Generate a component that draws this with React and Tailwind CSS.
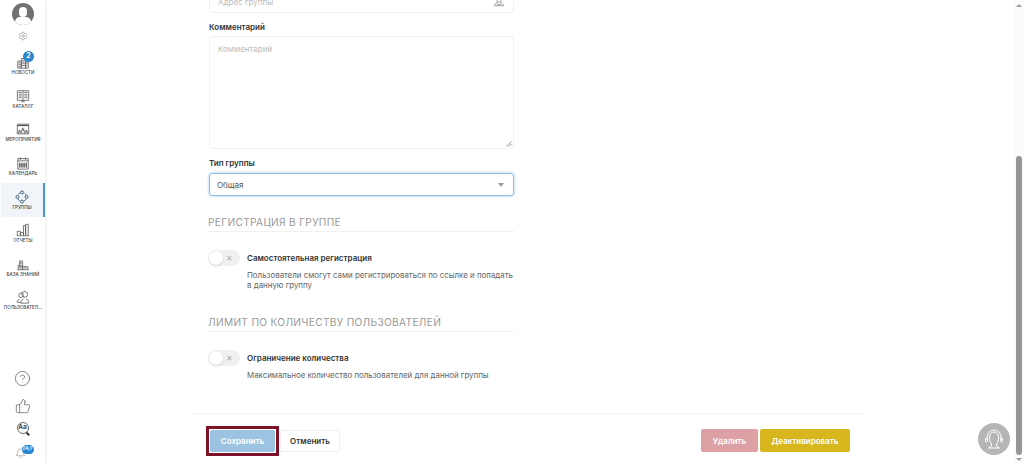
import React from "react";
import { Settings, CircleHelp, ThumbsUp, Bell } from "lucide-react";

const font = { fontFamily: "Inter, 'Noto Sans', sans-serif" };

// Small line drawings for the nav rail, 16x16 box
function NavIcon({ name }) {
  const common = { width: 14, height: 14, viewBox: "0 0 16 16", fill: "none", stroke: "#555", strokeWidth: 0.9, className: "block" };
  if (name === "news")
    return (
      <svg {...common}>
        <path d="M2 15V7h4v8M6 15V4h5v11M11 15V8h3v7H2" />
        <path d="M3 9h2M3 11h2M3 13h2M7 6h3M7 8h3M7 10h3M7 12h3M12 10h1M12 12h1" />
      </svg>
    );
  if (name === "book")
    return (
      <svg {...common}>
        <path d="M1.5 2h13v11h-13zM8 2v12M6 14.5h4" />
        <path d="M3 4h3.5M3 6h3.5M3 8h3.5M3 10h3.5M9.5 4H13M9.5 6H13M9.5 8H13M9.5 10H13" />
      </svg>
    );
  if (name === "event")
    return (
      <svg {...common}>
        <path d="M1.5 2.5h13v11h-13z" />
        <path d="M1.5 4h13" strokeWidth="1.4" />
        <path d="M3 13v-2h2v2M6.5 13V9.5h3V13M11 13v-2h2v2" />
        <circle cx="8" cy="8" r="1" />
        <circle cx="4" cy="10" r="0.7" />
        <circle cx="12" cy="10" r="0.7" />
      </svg>
    );
  if (name === "calendar")
    return (
      <svg {...common}>
        <path d="M2 3h12v12H2zM2 5.5h12M5 1.500v3M11 1.500v3" />
        <path d="M4 7.500v6M6 7.500v6M8 7.500v6M10 7.500v6M12 7.500v6M3.500 9.500h9M3.500 11.500h9" />
      </svg>
    );
  if (name === "groups")
    return (
      <svg {...common} stroke="#3f5d78" strokeWidth="1.100">
        <circle cx="8" cy="8" r="5.200" strokeDasharray="3 5.170" strokeDashoffset="-2.500" />
        <circle cx="8" cy="2.800" r="1.700" />
        <circle cx="2.800" cy="8" r="1.700" />
        <circle cx="13.200" cy="8" r="1.700" />
        <circle cx="8" cy="13.200" r="1.700" />
      </svg>
    );
  if (name === "chart")
    return (
      <svg {...common}>
        <path d="M1.500 14V9.500h3.500V14M5 14V11h3.500v3M8.500 14V3H11v11M11 14V1.500h3V14M1 14.500h14" />
      </svg>
    );
  if (name === "base")
    return (
      <svg {...common}>
        <path d="M1.500 14.500h13M2.500 14.500v-5h5v5M7.500 14.500V11h6v3.500M4 9.500V4.500h3.500v5" />
        <path d="M3.500 11h3M3.500 12.500h3M9 12.500h3M4.800 6h1.500M4.800 7.500h1.500" />
      </svg>
    );
  return (
    <svg {...common}>
      <circle cx="10" cy="5" r="3.300" />
      <circle cx="5.800" cy="6" r="2.600" />
      <path d="M5.500 15c0-3 1.500-4 3-4.600M14.500 15c0-3-1-4-3-4.600M5.500 15h9M1.500 14c0-2 1-3 2.500-3.600M1.500 14h4" />
    </svg>
  );
}

function NavItem({ icon, label, active, badge }) {
  return (
    <div
      className={`relative h-[33.6px] w-[44px] ml-px flex flex-col items-center justify-end pb-[5px] ${
        active ? "bg-[#f1f5f9] border-r-2 border-[#4f93cf]" : ""
      }`}
    >
      <div className="relative">
        <NavIcon name={icon} />
        {badge && (
          <span className="absolute -top-[4px] -right-[4px] w-[11px] h-[11px] rounded-full bg-[#2a86cf] text-white text-[7px] font-bold flex items-center justify-center">
            {badge}
          </span>
        )}
      </div>
      <span className="text-[4.5px] leading-[8px] font-medium text-[#444] whitespace-nowrap">{label}</span>
    </div>
  );
}

function Toggle() {
  return (
    <div className="relative w-[32px] h-[16px] rounded-full bg-[#f0f0f0] shrink-0 flex items-center justify-end pr-[7px] text-[8px] text-[#aaa]">
      <span className="absolute left-[1px] top-[1px] w-[14px] h-[14px] rounded-full bg-white shadow-sm" />
      <span>✕</span>
    </div>
  );
}

function OptionRow({ title, children }) {
  return (
    <div className="flex gap-[7px] -ml-px">
      <Toggle />
      <div className="pt-[2px]">
        <div className="text-[8px] leading-[12px] font-semibold text-[#333]">{title}</div>
        <div className="mt-[6px] text-[7.9px] leading-[10px] text-[#666] w-[268px]">{children}</div>
      </div>
    </div>
  );
}

function SectionTitle({ children }) {
  return (
    <div className="-ml-px w-[306px] h-[15px] border-b border-[#f0f0f0] text-[10.2px] leading-[11px] text-[#999] tracking-[0.3px] whitespace-nowrap">
      {children}
    </div>
  );
}

export default function App() {
  return (
    <div style={font} className="flex h-[465px] w-[1024px] overflow-hidden bg-white">
      {/* nav rail */}
      <aside className="w-[45px] shrink-0 flex flex-col items-center shadow-[1px_0_3px_rgba(0,0,0,0.08)] bg-white">
        <div className="mt-[3px] w-[22px] h-[22px] rounded-full bg-[#727272] overflow-hidden relative shrink-0">
          <span className="absolute left-[7px] top-[4px] w-[8px] h-[10px] rounded-full bg-white" />
          <span className="absolute left-[3px] top-[14px] w-[16px] h-[10px] rounded-full bg-white" />
        </div>
        <Settings className="mt-[6px] mb-[7.600px] shrink-0" size={10} strokeWidth={1} color="#666" />
        <div className="flex flex-col">
          <NavItem icon="news" label="НОВОСТИ" badge="2" />
          <NavItem icon="book" label="КАТАЛОГ" />
          <NavItem icon="event" label="МЕРОПРИЯТИЯ" />
          <NavItem icon="calendar" label="КАЛЕНДАРЬ" />
          <NavItem icon="groups" label="ГРУППЫ" active />
          <NavItem icon="chart" label="ОТЧЕТЫ" />
          <NavItem icon="base" label="БАЗА ЗНАНИЙ" />
          <NavItem icon="users" label="ПОЛЬЗОВАТЕЛ..." />
        </div>
        <div className="flex-1" />
        <CircleHelp size={17} strokeWidth={1} color="#555" className="mb-[11px] shrink-0" />
        <ThumbsUp size={16} strokeWidth={1} color="#555" className="mb-[8px] shrink-0" />
        <div className="relative w-[12px] h-[12px] rounded-full border border-[#666] text-[6.500px] font-semibold text-[#333] flex items-center justify-center mb-[11px] shrink-0">
          Aa
          <span className="absolute -right-[2px] -bottom-[1px] w-[4px] h-[1.500px] bg-[#333] rotate-45" />
        </div>
        <div className="relative mb-[6px] ml-[3px] w-[19px] h-[14px] shrink-0">
          <Bell size={11} strokeWidth={1} color="#666" className="absolute left-0 bottom-0" />
          <span className="absolute right-0 top-0 w-[12px] h-[9px] rounded-full bg-[#2a86cf] text-white text-[4.500px] font-semibold flex items-center justify-center">
            24/7
          </span>
        </div>
      </aside>

      {/* page content */}
      <main className="relative flex-1 flex flex-col min-w-0">
        <div className="flex-1 pl-[164px] -mt-[9px]">
          <div className="w-[305px] flex flex-col">
            <div className="h-[22px] border border-[#f0f0f0] rounded-[3px] flex items-center justify-between px-[8px] text-[8px] text-[#bbb]">
              <span>Адрес группы</span>
              <svg width="10" height="10" viewBox="0 0 10 10" fill="none" stroke="#777" strokeWidth="0.7" className="mr-[1px]">
                <circle cx="5" cy="3" r="2.200" />
                <path d="M3.500 5c-.3 1-1 1.300-2 1.800-.7.4-1 1-1 2h9c0-1-.3-1.600-1-2-1-.5-1.700-.8-2-1.800" />
                <path d="M3 7.500h4" />
              </svg>
            </div>
            <label className="mt-[9px] text-[8px] leading-[10px] font-semibold text-[#333]">Комментарий</label>
            <div className="relative mt-[4px] h-[113px] border border-[#f0f0f0] rounded-[3px] px-[8px] py-[7px] text-[8px] leading-[10px] text-[#bbb]">
              Комментарий
              <svg width="6" height="6" viewBox="0 0 6 6" stroke="#666" strokeWidth="0.7" className="absolute right-[1px] bottom-[1px]">
                <path d="M0.500 5.500 5.500 0.500M3 5.500l2.500-2.500" />
              </svg>
            </div>
            <label className="mt-[9px] text-[8px] leading-[10px] font-semibold text-[#333]">Тип группы</label>
            <div className="mt-[5px] h-[23px] border border-[#8fbfe6] rounded-[3px] shadow-[0_0_3px_rgba(90,160,220,0.6)] flex items-center justify-between pl-[7px] pr-[9px] text-[8px] text-[#555]">
              <span>Общая</span>
              <span className="w-0 h-0 border-x-[3px] border-x-transparent border-t-[4px] border-t-[#999]" />
            </div>
            <div className="mt-[21px]">
              <SectionTitle>РЕГИСТРАЦИЯ В ГРУППЕ</SectionTitle>
            </div>
            <div className="mt-[18px]">
              <OptionRow title="Самостоятельная регистрация">
                Пользователи смогут сами регистрироваться по ссылке и попадать в данную группу
              </OptionRow>
            </div>
            <div className="mt-[27px]">
              <SectionTitle>ЛИМИТ ПО КОЛИЧЕСТВУ ПОЛЬЗОВАТЕЛЕЙ</SectionTitle>
            </div>
            <div className="mt-[18px]">
              <OptionRow title="Ограничение количества">
                <span className="whitespace-nowrap">Максимальное количество пользователей для данной группы</span>
              </OptionRow>
            </div>
          </div>
        </div>

        {/* footer actions */}
        <div className="shrink-0 h-[52px] ml-[147px] w-[673px] border-t border-[#f2f2f2] flex items-start justify-between pl-[14px] pr-[15px] pt-[15px]">
          <div className="flex items-center gap-[1px] -mt-[3px]">
            <div className="border-[3px] border-[#7d1128] p-[1px]">
              <button className="block w-[65px] h-[22px] rounded-[2px] bg-[#9cc3e2] text-white text-[8px] font-semibold">
                Сохранить
              </button>
            </div>
            <button className="w-[60px] h-[22px] rounded-[2px] border border-[#f0f0f0] bg-white text-[#333] text-[8px] font-semibold">
              Отменить
            </button>
          </div>
          <div className="flex gap-[2px]">
            <button className="w-[57px] h-[23px] rounded-[2px] bg-[#dda0a5] text-white text-[8px] font-semibold">
              Удалить
            </button>
            <button className="w-[90px] h-[23px] rounded-[2px] bg-[#d8b61e] text-white text-[8px] font-semibold">
              Деактивировать
            </button>
          </div>
        </div>

        {/* floating support button */}
        <div className="absolute left-[933px] top-[423px] w-[32px] h-[32px] rounded-full bg-[#b5b5b5] flex items-center justify-center">
          <svg width="24" height="24" viewBox="0 0 24 24" fill="none" stroke="#fff" strokeWidth="1">
            <path d="M5 13V10a7 7 0 0 1 14 0v3" />
            <path d="M7.500 10c0-3 2-5 4.500-5s4.500 2 4.500 5c0 4-1 6-2 7v2l3 2H6.500l3-2v-2c-1-1-2-3-2-7z" />
            <rect x="3.500" y="11" width="2" height="4" rx="1" />
            <rect x="18.500" y="11" width="2" height="4" rx="1" />
          </svg>
        </div>
      </main>

      {/* scrollbar */}
      <div className="w-[10px] shrink-0 bg-[#fcfcfc] flex flex-col items-center">
        <span className="mt-[4px] w-0 h-0 border-x-[3px] border-x-transparent border-b-[3px] border-b-[#999]" />
        <div className="mt-[149px] w-[6px] h-[299px] rounded-full bg-[#969696]" />
        <span className="mt-[3px] w-0 h-0 border-x-[3px] border-x-transparent border-t-[3px] border-t-[#999]" />
      </div>
    </div>
  );
}
